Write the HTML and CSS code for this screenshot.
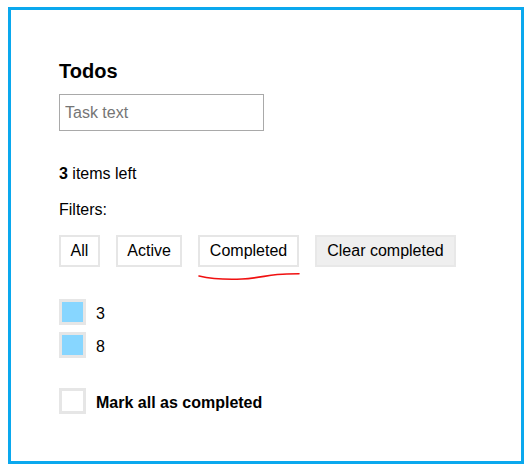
FILE: index.html
```html
<!DOCTYPE html>
<html>
<head>
<meta charset="utf-8">
<link rel="stylesheet" href="styles.css">
</head>
<body>
<div class="frame">
  <h1 class="title">Todos</h1>
  <input class="task-input" type="text" placeholder="Task text">
  <p class="count"><b>3</b> items left</p>
  <p class="filters-label">Filters:</p>
  <div class="buttons">
    <button class="btn">All</button>
    <button class="btn">Active</button>
    <button class="btn">Completed</button>
    <button class="btn btn-clear">Clear completed</button>
  </div>
  <ul class="list">
    <li class="item"><span class="box box-done"></span><span class="label">3</span></li>
    <li class="item"><span class="box box-done"></span><span class="label">8</span></li>
  </ul>
  <div class="item mark-all"><span class="box"></span><span class="label label-bold">Mark all as completed</span></div>
  <svg class="scribble" width="104" height="10" viewBox="0 0 104 10">
    <path d="M2 5 C 15 8, 30 8.6, 45 8 C 62 7.2, 75 3, 90 3 L 102 2.8" fill="none" stroke="#f01010" stroke-width="1.6" stroke-linecap="round"/>
  </svg>
</div>
</body>
</html>
```

FILE: styles.css
```css
* { box-sizing: border-box; }
body {
  margin: 7px 8px;
  font-family: "Liberation Sans", Arial, sans-serif;
  font-size: 16px;
  color: #000;
  background: #fff;
}
.frame {
  position: relative;
  width: 516px;
  height: 457px;
  border: 3px solid #0aa8ee;
  padding: 48px 0 0 48px;
}
.title {
  margin: 1px 0 0;
  font-size: 20px;
  line-height: 24px;
  font-weight: bold;
}
.task-input {
  display: block;
  margin-top: 11px;
  width: 205px;
  height: 37px;
  border: 1px solid #a9a9a9;
  padding: 0 5px;
  font-family: "Liberation Sans", Arial, sans-serif;
  font-size: 16px;
  outline: none;
}
.task-input::placeholder { color: #757575; }
.count {
  margin: 34px 0 0;
  line-height: 18px;
}
.filters-label {
  margin: 18px 0 0;
  line-height: 18px;
}
.buttons {
  display: flex;
  gap: 16px;
  margin-top: 16px;
}
.btn {
  height: 32px;
  padding: 0 9.5px;
  border: 2px solid #e6e6e6;
  background: #fff;
  font-family: "Liberation Sans", Arial, sans-serif;
  font-size: 16px;
  color: #000;
  line-height: 18px;
}
.btn-clear {
  background: #efefef;
  border-color: #e8e8e8;
  padding: 0 10.5px;
}
.list {
  list-style: none;
  margin: 32px 0 0;
  padding: 0;
  display: flex;
  flex-direction: column;
  gap: 7px;
}
.item {
  display: flex;
  align-items: center;
  gap: 10px;
  line-height: 18px;
}
.label { padding-top: 3px; }
.box {
  width: 27px;
  height: 26px;
  border: 3px solid #e6e6e6;
  background: #fff;
}
.box-done { background: #87d6ff; }
.mark-all { margin-top: 30px; }
.label-bold { font-weight: bold; padding-top: 3px; }
.scribble {
  position: absolute;
  left: 186px;
  top: 261px;
}
```
